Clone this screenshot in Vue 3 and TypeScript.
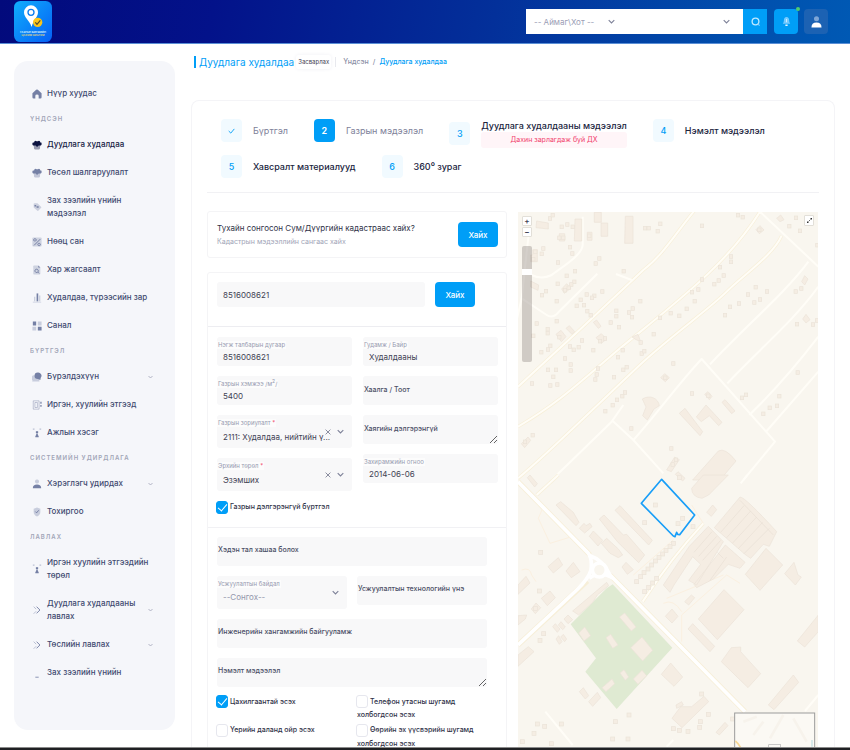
<script setup lang="ts">
import { ref } from 'vue'

interface Shape { d: string; o?: number; s?: boolean }
interface NavItem { text: string; icon: string; active?: boolean; open?: boolean }
interface NavGroup { title: string; items: NavItem[] }

// Icon shapes on a 24-unit grid; `o` is opacity, `s` marks a stroked shape.
const icons: Record<string, Shape[]> = {
  home: [{ d: 'M1 10 L10 2 Q12 .5 14 2 L23 10 V20 Q23 23 20 23 H16 V16 Q16 13 12 13 Q8 13 8 16 V23 H4 Q1 23 1 20Z' }],
  basket: [
    { d: 'M4 11 H20 L19 21 Q18.6 23 16 23 H8 Q5.4 23 5 21Z', o: 0.4 },
    { d: 'M6 3 Q8 1 11 3 H14 Q17 1 19 3 L20 6 H22 Q23 6 23 8 V11 Q23 13 21 13 H16 L12 17 L9 13 H3 Q1 13 1 11 V8 Q1 6 3 6 H5Z' },
  ],
  tag: [
    { d: 'M4 5 Q4 3 6 3 H13 L22 12 Q23 13 22 14 L15 21 Q14 22 13 21 L4 13Z', o: 0.32 },
    { d: 'M6 7 H10 V11 H6Z M11 10 H16 V14 H11Z' },
  ],
  percent: [
    { d: 'M3 1 H21 Q23 1 23 3 V21 Q23 23 21 23 H3 Q1 23 1 21 V3 Q1 1 3 1Z', o: 0.3 },
    { d: 'M20 5 L5 20 M7 4 A3 3 0 1 0 7.1 4 M17 15 A3 3 0 1 0 17.1 15', s: true },
  ],
  file: [
    { d: 'M5 1 H15 L20 6 V21 Q20 23 18 23 H5 Q3 23 3 21 V3 Q3 1 5 1Z', o: 0.3 },
    { d: 'M15 1 L20 6 H15Z' },
    { d: 'M11 10 A4 4 0 1 0 11.1 10 M14 17 L17 20', s: true },
  ],
  bars: [
    { d: 'M11 1 H15 V20 H11Z' },
    { d: 'M5 9 H8 V20 H5Z M17 6 H20 V20 H17Z M2 21 H22 V23 H2Z', o: 0.35 },
  ],
  grid: [
    { d: 'M2 1 H10 V11 H2Z M14 14 H23 V23 H14Z' },
    { d: 'M14 1 H23 V11 H14Z M1 14 H10 V23 H1Z', o: 0.35 },
  ],
  bubble: [
    { d: 'M8 9 A6 6 0 0 0 2 21 L0 23 H9 L18 23 L17 18Z', o: 0.35 },
    { d: 'M14 1 A8 8 0 1 0 14 17 L20 19 L21 14 A8 8 0 0 0 14 1Z' },
  ],
  book: [
    { d: 'M3 2 H17 V22 H3Z M7 6 H13 V18 H7Z', o: 0.45, s: true },
    { d: 'M20 4 H23 V9 H20Z M20 12 H23 V16 H20Z' },
  ],
  people: [
    { d: 'M2 1 H6 V4 H2Z M18 1 H22 V4 H18Z', o: 0.45 },
    { d: 'M12 7 A3 3 0 1 0 12.1 7 M10 14 H14 V17 L16 19 V22 H8 V19 L10 17Z' },
  ],
  user: [
    { d: 'M12 1 A5 5 0 1 0 12.1 1', o: 0.35 },
    { d: 'M2 22 Q2 13 12 13 Q22 13 22 22Z' },
  ],
  shield: [
    { d: 'M12 1 L20 4 V12 Q20 19 12 23 Q4 19 4 12 V4Z', o: 0.35 },
    { d: 'M8 11 L11 14 L16 8', s: true },
  ],
  chevrons: [
    { d: 'M4 4 L10 10 M4 21 L10 15', o: 0.5, s: true },
    { d: 'M11 4 L19 12 L11 20', s: true },
  ],
  dash: [{ d: 'M8 21 H16 V23 H8Z' }],
}

const groups: NavGroup[] = [
  { title: '', items: [{ text: 'Нүүр хуудас', icon: 'home' }] },
  {
    title: 'Үндсэн',
    items: [
      { text: 'Дуудлага худалдаа', icon: 'basket', active: true },
      { text: 'Төсөл шалгаруулалт', icon: 'basket' },
      { text: 'Зах зээлийн үнийн мэдээлэл', icon: 'tag' },
      { text: 'Нөөц сан', icon: 'percent' },
      { text: 'Хар жагсаалт', icon: 'file' },
      { text: 'Худалдаа, түрээсийн зар', icon: 'bars' },
      { text: 'Санал', icon: 'grid' },
    ],
  },
  {
    title: 'Бүртгэл',
    items: [
      { text: 'Бүрэлдэхүүн', icon: 'bubble', open: true },
      { text: 'Иргэн, хуулийн этгээд', icon: 'book' },
      { text: 'Ажлын хэсэг', icon: 'people' },
    ],
  },
  {
    title: 'Системийн удирдлага',
    items: [
      { text: 'Хэрэглэгч удирдах', icon: 'user', open: true },
      { text: 'Тохиргоо', icon: 'shield' },
    ],
  },
  {
    title: 'Лавлах',
    items: [
      { text: 'Иргэн хуулийн этгээдийн төрөл', icon: 'people' },
      { text: 'Дуудлага худалдааны лавлах', icon: 'chevrons', open: true },
      { text: 'Төслийн лавлах', icon: 'chevrons', open: true },
      { text: 'Зах зээлийн үнийн', icon: 'dash' },
    ],
  },
]

const steps = [
  { n: '1', text: 'Бүртгэл', state: 'done', note: '' },
  { n: '2', text: 'Газрын мэдээлэл', state: 'current', note: '' },
  { n: '3', text: 'Дуудлага худалдааны мэдээлэл', state: '', note: 'Дахин зарлагдаж буй ДХ' },
  { n: '4', text: 'Нэмэлт мэдээлэл', state: '', note: '' },
  { n: '5', text: 'Хавсралт материалууд', state: '', note: '' },
  { n: '6', text: '360⁰ зураг', state: '', note: '' },
]

const parcel = ref('8516008621')
const unit = ref('8516008621')
const street = ref('Худалдааны')
const area = ref('5400')
const orderDate = ref('2014-06-06')
const detailed = ref(true)
const zoomLevel = ref(21)
const flags = ref([
  { id: 'power', text: 'Цахилгаантай эсэх', on: true },
  { id: 'phone', text: 'Телефон утасны шугамд холбогдсон эсэх', on: false },
  { id: 'flood', text: 'Үерийн даланд ойр эсэх', on: false },
  { id: 'own', text: 'Өөрийн эх үүсвэрийн шугамд холбогдсон эсэх', on: false },
])

// Centres of small houses in the upper and lower halves of the map.
const housesTop = [
  [120, 40], [128, 30], [155, 65], [172, 58], [188, 65], [148, 98], [160, 98], [238, 92], [180, 126], [187, 145], [100, 130], [95, 146], [76, 140], [70, 162],
  [144, 172], [268, 160], [257, 175], [195, 198], [170, 212], [143, 236], [193, 230], [184, 238], [165, 255], [176, 248], [108, 258], [96, 270], [140, 288], [253, 272],
  [277, 259], [230, 268], [212, 284], [200, 302], [246, 278], [222, 300], [232, 318], [242, 330], [391, 288], [368, 310], [357, 322], [366, 336], [319, 317], [319, 333],
  [302, 352], [327, 366], [140, 348], [80, 355], [113, 372], [113, 384], [70, 392], [148, 396], [121, 422], [114, 433], [94, 441], [180, 424], [191, 434], [206, 426], [216, 406],
  [250, 435], [285, 400], [270, 408], [165, 460], [182, 478], [182, 496], [138, 494], [114, 494], [130, 515], [121, 541], [142, 538], [66, 535], [264, 490], [260, 508],
  [256, 523], [312, 516], [340, 494], [350, 486], [338, 435], [324, 456], [395, 445], [403, 438], [431, 387], [392, 412], [450, 338], [482, 324], [508, 332], [530, 311],
  [554, 288], [546, 261], [565, 253], [576, 223], [613, 237], [626, 226], [641, 211], [630, 186], [663, 154], [663, 170], [576, 62], [451, 56], [443, 78], [405, 69], [416, 69],
  [341, 198], [645, 330], [660, 305], [687, 295], [714, 268], [737, 246], [771, 259], [750, 283], [733, 292], [684, 30], [698, 36], [748, 74], [870, 77], [838, 63], [858, 38],
  [922, 120], [857, 259], [874, 250], [861, 357], [909, 358], [921, 346], [863, 502], [546, 565], [595, 572], [708, 569], [696, 578], [808, 573], [801, 602], [779, 608], [760, 626],
  [490, 475], [466, 518], [345, 562], [337, 573], [321, 584], [308, 600], [286, 618], [364, 670], [484, 730], [488, 778], [498, 764], [68, 690], [45, 710],
]
const housesBottom = [
  [436, 90], [404, 143], [518, 130], [504, 146], [549, 155], [92, 232], [88, 348], [76, 400], [90, 496], [101, 476], [357, 720], [316, 740], [308, 792], [354, 792], [82, 747],
  [104, 754], [154, 747], [72, 775], [37, 800], [124, 806], [575, 657], [595, 718], [571, 740], [569, 757], [534, 769], [508, 766], [490, 761], [668, 732], [508, 8],
  [490, 205], [480, 215], [468, 226], [458, 237], [447, 247], [436, 258], [425, 270], [414, 282], [402, 293], [392, 305], [380, 320], [440, 310], [428, 324], [416, 337], [404, 350],
]
</script>

<template>
  <div class="page">
    <header class="top">
      <a class="logo" href="#" aria-label="Газрын биржийн цахим систем">
        <svg viewBox="0 0 114 123">
          <defs>
            <linearGradient id="lg" x1="0" y1="0" x2="1" y2="1">
              <stop offset="0" stop-color="#10aefc" /><stop offset="1" stop-color="#0560f5" />
            </linearGradient>
          </defs>
          <rect width="114" height="123" rx="19" fill="url(#lg)" />
          <path d="M51 13 a21 21 0 0 1 21 21 c0 14 -13 22 -19 44 c-7 -20 -23 -28 -23 -44 a21 21 0 0 1 21 -21Z" fill="#fff" />
          <circle cx="51" cy="34" r="9" fill="#fff" stroke="#0b7df0" stroke-width="4" />
          <circle cx="71" cy="64" r="14" fill="#fbc51b" />
          <path d="M64 64 l5 6 l10 -12" fill="none" stroke="#4b4a35" stroke-width="3.5" />
          <text x="57" y="96" class="logo-a">ГАЗРЫН БИРЖИЙН</text>
          <text x="57" y="106" class="logo-b">ЦАХИМ СИСТЕМ</text>
        </svg>
      </a>
      <form class="search" @submit.prevent>
        <div class="pick">
          <select aria-label="Аймаг\Хот"><option>-- Аймаг\Хот --</option></select>
          <svg class="chev" viewBox="0 0 10 6"><path d="M1 1 L5 5 L9 1" /></svg>
        </div>
        <div class="pick wide">
          <select aria-label="Сум"><option></option></select>
          <svg class="chev" viewBox="0 0 10 6"><path d="M1 1 L5 5 L9 1" /></svg>
        </div>
        <button class="sq find" aria-label="Хайх">
          <svg viewBox="0 0 24 24"><circle cx="12" cy="12" r="9" fill="none" stroke="#bfe9ff" stroke-width="3.5" /><path d="M18 18 L23 23" stroke="#7fd0ff" stroke-width="3" /></svg>
        </button>
      </form>
      <button class="sq bell" aria-label="Мэдэгдэл">
        <svg viewBox="0 0 24 26"><path d="M12 1 Q19 2 19 10 Q19 15 22 19 H2 Q5 15 5 10 Q5 2 12 1Z" fill="#74caff" /><path d="M11 6 H13 V15 H11Z M9 21 H15 V25 H9Z" fill="#e8f8ff" /></svg>
        <i class="dot"></i>
      </button>
      <button class="sq me" aria-label="Хэрэглэгч">
        <svg viewBox="0 0 24 26"><circle cx="12" cy="6" r="5.5" fill="#7fa6d6" /><path d="M1 25 Q1 14 12 14 Q23 14 23 25Z" fill="#fff" /></svg>
      </button>
    </header>

    <div class="body">
      <aside class="side">
        <nav>
          <template v-for="g in groups" :key="g.title">
            <h2 v-if="g.title">{{ g.title }}</h2>
            <a v-for="it in g.items" :key="it.text" href="#" class="item" :class="{ active: it.active }">
              <svg class="ico" viewBox="0 0 24 24">
                <path v-for="(p, i) in icons[it.icon]" :key="i" :d="p.d" :opacity="p.o ?? 1" :class="{ line: p.s }" />
              </svg>
              <span>{{ it.text }}</span>
              <svg v-if="it.open" class="chev pale" viewBox="0 0 10 6"><path d="M1 1 L5 5 L9 1" /></svg>
            </a>
          </template>
        </nav>
      </aside>

      <main>
        <div class="title">
          <h1>Дуудлага худалдаа</h1>
          <span class="tagged">Засварлах</span>
          <span class="crumbs"><a href="#">Үндсэн</a><b>/</b><a href="#" class="here">Дуудлага худалдаа</a></span>
        </div>

        <section class="panel">
          <ol class="steps">
            <li v-for="s in steps" :key="s.n" :class="s.state">
              <span class="num">
                <svg v-if="s.state === 'done'" viewBox="0 0 10 8"><path d="M1 4 L4 7 L9 1" /></svg>
                <template v-else>{{ s.n }}</template>
              </span>
              <span class="cap">{{ s.text }}<em v-if="s.note">{{ s.note }}</em></span>
            </li>
          </ol>

          <div class="cols">
            <div class="form">
              <div class="card ask">
                <div>
                  <p>Тухайн сонгосон Сум/Дүүргийн кадастраас хайх?</p>
                  <small>Кадастрын мэдээллийн сангаас хайх</small>
                </div>
                <button class="go">Хайх</button>
              </div>

              <div class="card">
                <form class="lookup" @submit.prevent>
                  <input v-model="parcel" aria-label="Нэгж талбарын дугаар хайх">
                  <button class="go">Хайх</button>
                </form>

                <div class="pair">
                  <div class="stack">
                    <div class="field"><input id="unit" v-model="unit"><label for="unit">Нэгж талбарын дугаар</label></div>
                    <div class="field"><input id="area" v-model="area"><label for="area">Газрын хэмжээ /м<sup>2</sup>/</label></div>
                    <div class="field drop">
                      <select id="use"><option>2111: Худалдаа, нийтийн ү...</option></select>
                      <label for="use">Газрын зориулалт <i>*</i></label>
                      <button class="clear" aria-label="Арилгах"><svg viewBox="0 0 10 10"><path d="M1 1 L9 9 M9 1 L1 9" /></svg></button>
                      <svg class="chev" viewBox="0 0 10 6"><path d="M1 1 L5 5 L9 1" /></svg>
                    </div>
                    <div class="field drop">
                      <select id="right"><option>Эзэмших</option></select>
                      <label for="right">Эрхийн төрөл <i>*</i></label>
                      <button class="clear" aria-label="Арилгах"><svg viewBox="0 0 10 10"><path d="M1 1 L9 9 M9 1 L1 9" /></svg></button>
                      <svg class="chev" viewBox="0 0 10 6"><path d="M1 1 L5 5 L9 1" /></svg>
                    </div>
                  </div>
                  <div class="stack">
                    <div class="field"><input id="street" v-model="street"><label for="street">Гудамж / Байр</label></div>
                    <div class="field empty"><input id="door"><label for="door">Хаалга / Тоот</label></div>
                    <div class="field empty"><textarea id="addr"></textarea><label for="addr">Хаягийн дэлгэрэнгүй</label></div>
                    <div class="field"><input id="date" v-model="orderDate"><label for="date">Захирамжийн огноо</label></div>
                  </div>
                </div>
                <label class="tick main-tick"><input v-model="detailed" type="checkbox">Газрын дэлгэрэнгүй бүртгэл</label>

                <div class="more">
                  <div class="field empty"><input id="fence"><label for="fence">Хэдэн тал хашаа болох</label></div>
                  <div class="half">
                    <div class="field drop muted">
                      <select id="water"><option>--Сонгох--</option></select>
                      <label for="water">Усжуулалтын байдал</label>
                      <svg class="chev" viewBox="0 0 10 6"><path d="M1 1 L5 5 L9 1" /></svg>
                    </div>
                    <div class="field empty"><input id="tech"><label for="tech">Усжуулалтын технологийн үнэ</label></div>
                  </div>
                  <div class="field empty"><input id="eng"><label for="eng">Инженерийн хангамжийн байгууламж</label></div>
                  <div class="field empty"><textarea id="note"></textarea><label for="note">Нэмэлт мэдээлэл</label></div>
                  <div class="ticks">
                    <label v-for="f in flags" :key="f.id" class="tick"><input v-model="f.on" type="checkbox">{{ f.text }}</label>
                  </div>
                </div>
              </div>
            </div>

            <div class="map">
              <svg class="canvas" viewBox="0 0 900 1608">
                <rect width="900" height="1608" fill="#f9f6ef" />
                <g transform="translate(-24 -21)">
                  <g class="halo">
                    <path d="M24 545 C150 430 300 290 400 195 C460 150 500 80 555 15" />
                    <path d="M24 665 C150 590 200 540 330 430 C500 290 650 180 750 20" />
                    <path d="M24 820 C110 750 250 610 400 470 C500 380 600 310 650 260 C700 210 790 150 815 92" />
                  </g>
                  <g class="road">
                    <path d="M24 545 C150 430 300 290 400 195 C460 150 500 80 555 15 M24 665 C150 590 200 540 330 430 C500 290 650 180 750 20 L925 185 M24 820 C110 750 250 610 400 470 C500 380 600 310 650 260 C700 210 790 150 815 92" />
                    <path d="M125 825 L305 650 L340 600 M305 645 L370 705 L460 805 M370 705 C430 640 510 530 575 462 L795 710 L700 825 M600 478 C700 370 830 260 895 170 M652 535 C740 440 850 350 925 245 M718 630 C780 570 860 480 925 395 M770 678 L925 500" />
                    <path d="M218 35 V120 C218 150 150 190 125 210 Q95 225 65 210 M58 70 L35 280 L110 330 Q128 342 145 322 L262 206 M35 280 L20 345 M318 207 L365 225" />
                  </g>
                  <g class="bld">
                    <path d="M80 48 L115 54 V72 L78 68Z M195 42 H215 V108 H193Z M253 22 H274 V52 H253Z M273 54 H293 V94 H273Z M346 34 H369 V115 H344Z M232 82 H246 V106 H232Z M148 86 H164 V108 H148Z M68 134 H82 V170 H62V150 H68Z M62 228 L86 240 L84 256 L62 246Z" />
                    <path d="M155 252 L170 236 L182 250 L163 265Z M138 388 L153 376 L168 395 L154 410Z M168 370 L178 362 L194 380 L186 388Z M250 352 L260 345 L273 364 L265 370Z M366 396 L384 388 L392 410 L378 404Z M258 398 L274 386 L290 402 L274 415Z" />
                    <path d="M875 230 L884 212 L894 222 L884 240Z M878 342 L888 328 L900 344 L888 354Z M800 40 L812 30 L822 44 L810 50Z M738 74 L750 62 L762 75 L748 86Z M452 518 L464 506 L478 518 L466 530Z" />
                    <path d="M397 582 C420 568 445 580 448 602 L432 612 L412 645 L398 632 L408 606Z M508 625 L525 610 L578 680 L570 692Z M559 636 L588 600 L636 652 L626 662 L598 632 L574 650Z M636 592 L645 584 L675 618 L665 626Z M584 568 L594 560 L606 574 L598 584Z" />
                    <path d="M548 825 L625 738 Q645 726 678 768 L630 825Z M470 795 L494 756 L508 764 L484 800Z M496 808 L504 800 L525 820 L518 828Z M34 716 L54 696 L62 706 L44 728Z" />
                    <rect v-for="(h, i) in housesTop" :key="i" :x="h[0] - 5" :y="h[1] - 5" width="10" height="11" />
                  </g>
                </g>
                <g transform="translate(-24 789)">
                  <path d="M308 328 L487 518 L320 702 L226 590 L258 550 L182 448 L290 340Z" fill="#dfead2" />
                  <g class="halo wide">
                    <path d="M24 20 L240 240 M300 300 L705 710 M24 510 L232 318" />
                  </g>
                  <g class="halo"><path d="M80 60 L145 0 M398 380 C450 300 520 210 580 145" /></g>
                  <g class="lane">
                    <path d="M100 95 L85 130 L120 205 L185 185 M35 285 Q60 275 65 300 L78 320 M370 300 L490 195 M545 90 L580 145 M470 370 L640 300 M515 500 V420 L650 300 L690 325 M460 385 Q490 370 515 410" />
                  </g>
                  <g class="road big">
                    <path d="M24 20 L235 235 Q247 250 243 285 Q235 312 200 345 L24 510 M300 300 L705 710 M235 240 Q280 255 300 300 M238 310 Q270 285 310 310" />
                    <circle cx="268" cy="285" r="21" fill="#f9f6ef" />
                  </g>
                  <g class="road">
                    <path d="M80 60 L145 0 M398 380 C450 300 520 210 580 145 M106 710 L188 810 M885 708 L925 660 M692 25 L712 0 M470 815 L490 795" />
                  </g>
                  <g class="bld">
                    <path d="M52 8 L60 0 L82 26 L74 36Z M138 90 L152 80 L190 112 L207 142 L198 152Z M208 160 L222 145 L228 152 L240 145 L246 155 L224 174Z M238 184 L250 168 L278 196 L264 213Z M274 205 L290 190 L325 222 L338 240 L325 248 L300 235Z" />
                    <path d="M268 132 L282 120 L340 180 L350 178 L404 240 L386 263 L322 200Z M315 106 L330 92 L427 196 L416 210Z M336 276 L348 262 L370 284 L352 298Z M114 275 L145 248 L158 270 L130 294Z M168 288 L190 262 L210 290 L184 308Z" />
                    <path d="M24 330 L48 304 L60 324 L24 358Z M94 370 L120 348 L136 368 L112 392Z M64 402 L78 384 L92 398 L76 416Z M24 422 L50 420 L46 432 L24 450Z M24 540 L55 515 L72 530 L24 574Z M188 408 L290 322 L296 332 L262 360 L248 382 L206 420Z M162 432 L174 420 L188 434 L174 446Z" />
                    <path d="M128 455 L136 446 L150 462 L142 472Z M145 450 L153 440 L166 456 L158 464Z M138 492 L146 482 L156 500 L148 508Z M152 486 L160 478 L170 492 L164 500Z" />
                    <path d="M545 40 L580 0 L655 0 L596 60 L576 70 Q545 66 545 40Z M590 112 L608 90 L620 104 L604 124Z M613 158 L690 66 Q705 66 800 170 L778 214 L760 208 L722 250 L705 238Z" />
                    <path d="M538 214 L595 154 L640 200 L560 330 L536 316 L572 268 L548 245 L492 330 L480 352 L460 330 L500 270Z M552 328 L646 210 L705 262 L690 280 L655 268 L610 312 L560 338Z" />
                    <path d="M706 298 L768 220 L818 270 L750 346Z M824 296 L852 262 L864 300 L874 306 L856 330Z M565 432 L642 344 L702 404 L622 494Z M534 462 L548 446 L614 514 L600 530Z M466 424 L486 402 L504 424 L486 444Z M524 380 L544 360 L554 368 L536 390Z" />
                    <path d="M634 560 L664 518 L692 516 L692 530 L752 596 L714 638Z M454 598 L482 564 L518 606 L492 634Z M862 498 L925 420 V470 L884 516Z M775 690 L850 600 L866 622 L792 704Z M486 730 L512 695 L545 695 L582 664 L596 680 L516 758Z M498 690 L515 680 L520 690 L500 700Z M618 772 L645 742 L654 752 L628 780Z" />
                    <path d="M328 426 L344 414 L378 456 L364 468Z M362 518 L396 486 L428 526 L398 558Z M288 488 L302 478 L324 510 L308 520Z M206 474 L224 456 L242 482 L222 498Z M276 638 L306 612 L314 626 L288 650Z M330 594 L342 584 L356 606 L346 616Z M370 612 L396 586 L410 602 L384 628Z M208 650 L220 638 L236 662 L226 672Z M236 680 L262 652 L272 668 L248 694Z" />
                    <rect v-for="(h, i) in housesBottom" :key="i" :x="h[0] - 6" :y="h[1] - 6" width="12" height="12" />
                  </g>
                  <g class="cut">
                    <path d="M632 172 L702 92 M650 188 L722 108 M668 204 L740 126 M684 222 L758 142 M702 236 L778 160 M690 76 L790 180 M552 232 L606 170 M566 244 L620 184 M578 256 L632 196 M600 316 L650 246 M622 232 L640 250" />
                  </g>
                  <path d="M455 13 L554 120 L509 179 L503 178 L500 172 L495 185 L490 183 L394 85Z" fill="none" stroke="#189ef8" stroke-width="5" stroke-linejoin="round" />
                  <g>
                    <rect x="674" y="714" width="240" height="130" fill="#fbf9f4" stroke="#9b9b9b" stroke-width="3" />
                    <path d="M730 780 L760 740 M780 790 L820 720 M850 730 L890 800 M700 740 L740 725" stroke="#f7f3ec" stroke-width="8" fill="none" />
                    <path d="M676 798 Q684 804 692 818" stroke="#f7d795" stroke-width="5" fill="none" />
                    <path d="M906 795 V815" stroke="#cfe6e8" stroke-width="5" />
                    <rect x="776" y="809" width="36" height="30" fill="none" stroke="#b0b0b0" stroke-width="2" />
                  </g>
                </g>
              </svg>
              <div class="tools">
                <button aria-label="Томруулах">+</button>
                <button aria-label="Жижигрүүлэх">−</button>
                <input v-model="zoomLevel" class="zoom" type="range" min="0" max="100" aria-label="Масштаб">
              </div>
              <button class="full" aria-label="Бүтэн дэлгэц"><svg viewBox="0 0 10 10"><path d="M6 0 H10 V4Z M0 6 V10 H4Z" fill="#333" /><path d="M3 7 L7 3" stroke="#333" stroke-width="1.5" /></svg></button>
            </div>
          </div>
        </section>
      </main>
    </div>
    <div class="edge"></div>
  </div>
</template>

<style>
body { background: #fff; }
</style>

<style scoped>
* { box-sizing: border-box; margin: 0; }
.page { display: flex; flex-direction: column; height: 100vh; overflow: hidden; font-family: Inter, "Liberation Sans", sans-serif; font-size: 8px; color: #3f4254; }
button, input, select, textarea { font: inherit; color: inherit; border: 0; padding: 0; outline: 0; }
select { appearance: none; background: transparent; }
a { color: inherit; text-decoration: none; }
svg { display: block; }

.top { display: flex; align-items: center; flex: none; height: 44px; padding: 0 22px 0 14px; background: linear-gradient(100deg, #020a7c 0%, #03128a 25%, #03309a 58%, #0050ae 88%, #0059b4 100%); border-bottom: 1px solid #5a8fd6; }
.logo { width: 38px; margin-right: auto; }
.logo-a, .logo-b { font-size: 8px; font-weight: 700; text-anchor: middle; fill: #d8f1ff; }
.logo-b { fill: #d8d08a; }
.search { display: flex; height: 25px; width: 241px; }
.pick { display: grid; grid-template-columns: 1fr; width: 100px; background: #fff; color: #9a9db5; align-items: center; }
.pick.wide { flex: 1; }
.pick > * { grid-area: 1 / 1; }
.pick select { height: 100%; padding-left: 8px; }
.pick .chev { justify-self: end; margin-right: 11px; }
.pick.wide .chev { margin-right: 13px; }
.chev { width: 7px; height: 5px; fill: none; stroke: #7e8299; stroke-width: 1.6; pointer-events: none; }
.sq { position: relative; display: grid; place-items: center; flex: none; width: 24px; height: 25px; border-radius: 4px; background: #009ef7; }
.sq svg { width: 9px; height: 11px; }
.find { border-radius: 0; }
.bell { margin-left: 7px; }
.me { margin-left: 6px; background: #1c62b3; }
.me svg { width: 11px; height: 12px; }
.dot { position: absolute; top: -2px; right: -2px; width: 4px; height: 4px; border-radius: 2px; background: #50cd70; }

.body { display: flex; flex: 1; min-height: 0; padding: 0 15px 0 14px; gap: 16px; }
.side { flex: none; width: 161px; margin: 17px 0 17px; padding: 18px 19px 50px 16px; border-radius: 14px; background: #f5f6fa; }
nav { height: 100%; overflow: hidden; }
h2 { height: 23px; line-height: 23px; font-size: 6px; font-weight: 600; letter-spacing: 1px; text-transform: uppercase; color: #a1a5b7; }
.item { display: grid; grid-template-columns: 13px 1fr auto; align-items: center; column-gap: 4px; padding: 8px 3px 7px 0; line-height: 13px; font-size: 8px; font-weight: 500; color: #3f4a70; }
.item.active { color: #181c45; }
.ico { width: 10px; height: 10px; margin-left: 2px; fill: #7580a5; }
.active .ico { fill: #0b1240; }
.ico .line { fill: none; stroke: #66719a; stroke-width: 2; }
.pale { width: 5px; height: 4px; stroke: #a1a5b7; }

main { flex: 1; min-width: 0; display: flex; flex-direction: column; }
.title { display: flex; align-items: center; flex: none; height: 56px; padding: 0 0 20px 3px; }
h1 { padding-left: 3px; border-left: 2px solid #009ef7; line-height: 12px; font-size: 10px; font-weight: 400; color: #009ef7; }
.tagged { margin: 0 4px 0 2px; padding: 0 2px; line-height: 14px; font-size: 6px; border-radius: 3px; box-shadow: 0 0 4px #f0f0f4; }
.crumbs { display: flex; gap: 4px; padding-left: 7px; border-left: 1px solid #e8e9ee; line-height: 10px; font-size: 7px; font-weight: 500; color: #8b8fa5; }
.crumbs b { font-weight: 500; }
.here { color: #009ef7; }

.panel { flex: 1; min-height: 0; overflow: hidden; border: 1px solid #f4f4f7; border-bottom: 0; border-radius: 8px 8px 0 0; padding: 0 15px; }
.steps { display: flex; flex-wrap: wrap; align-items: flex-start; gap: 7px 26px; list-style: none; padding: 18px 0 14px 14px; border-bottom: 1px solid #f1f1f4; }
.steps li { display: flex; align-items: center; gap: 11px; font-size: 9px; font-weight: 500; color: #20243e; }
.num { display: grid; place-items: center; width: 21px; height: 23px; border-radius: 4px; background: #f1faff; color: #009ef7; }
.num svg { width: 7px; height: 6px; fill: none; stroke: #009ef7; stroke-width: 1.3; }
.cap { line-height: 13px; }
.cap em { display: block; line-height: 16px; font-size: 7px; font-weight: 400; font-style: normal; text-align: center; color: #f1416c; background: #fff5f8; border-radius: 3px; }
.steps .done, .steps .current { color: #7e8199; font-weight: 400; }
.current .num { background: #009ef7; color: #fff; font-weight: 600; }

.cols { display: grid; grid-template-columns: minmax(0, 1fr) minmax(0, 1fr); gap: 11px; padding: 18px 1px 0 0; }
.form { display: flex; flex-direction: column; gap: 14px; }
.card { border: 1px solid #f4f4f6; border-radius: 3px; padding: 9px 8px 9px 9px; }
.ask { display: flex; justify-content: space-between; align-items: center; height: 47px; }
.ask p { line-height: 12px; font-size: 8px; font-weight: 400; color: #2f3248; }
.ask small { display: block; margin-top: 3px; line-height: 10px; font-size: 7px; color: #a1a5b7; }
.go { width: 40px; height: 25px; border-radius: 4px; background: #009ef7; color: #fff; font-size: 8px; font-weight: 500; }
.lookup { display: flex; gap: 10px; margin: 0 -8px 10px -9px; padding: 0 31px 19px 9px; border-bottom: 1px solid #ededf1; }
.lookup input { flex: 1; min-width: 0; height: 25px; padding-left: 6px; border-radius: 3px; background: #f8f8f9; }
.pair { display: grid; grid-template-columns: 1fr 1fr; gap: 11px; }
.stack { display: flex; flex-direction: column; gap: 10px; }
.field { position: relative; display: grid; height: 29px; border-radius: 3px; background: #f8f8f9; }
.field > input, .field > select, .field > textarea, .field > label { grid-area: 1 / 1; }
.field > input, .field > select { padding: 10px 0 0 6px; min-width: 0; background: transparent; }
.field > textarea { padding: 4px; background: transparent; resize: vertical; height: 29px; color: #9a9cab; }
.field > label { place-self: start; margin-top: 4px; padding: 0 1px; line-height: 8px; font-size: 6px; color: #969ab0; background: #fcfcfc; pointer-events: none; }
.field label i { color: #f1416c; font-style: normal; }
.field sup { font-size: 5px; line-height: 0; }
.field.empty > label { align-self: center; margin: 0 0 2px; line-height: 10px; font-size: 7px; font-weight: 500; color: #4b4f66; background: none; }
.drop { height: 33px; }
.muted select { color: #9296ab; }
.drop .chev { position: absolute; right: 8px; top: 14px; }
.clear { position: absolute; right: 20px; top: 13px; width: 7px; height: 7px; background: transparent; }
.clear svg { width: 6px; height: 6px; stroke: #6b6f86; stroke-width: 1.3; }
.tick { display: block; line-height: 13px; font-size: 7px; font-weight: 500; color: #2f3248; }
.tick input { appearance: none; display: inline-grid; place-items: center; width: 12px; height: 13px; margin: 0 2px 0 -1px; vertical-align: middle; border: 1px solid #e6e7ee; border-radius: 3px; background: #fff; }
.tick input:checked { border-color: #009ef7; background: #009ef7; }
.tick input:checked::after { content: ""; width: 4px; height: 8px; margin-top: -2px; border: solid #fff; border-width: 0 1px 1px 0; transform: rotate(40deg); }
.main-tick { margin: 9px 0 13px; }
.more { display: flex; flex-direction: column; gap: 10px; margin: 0 -8px 0 -9px; padding: 9px 19px 0 9px; border-top: 1px solid #f1f1f4; }
.half, .ticks { display: grid; grid-template-columns: 1fr 1fr; column-gap: 10px; align-items: start; }
.ticks { row-gap: 2px; margin-top: -2px; }

.map { position: relative; margin-top: 1px; }
.canvas { width: 100%; height: auto; }
.halo { fill: none; stroke: #f7efd9; stroke-width: 10; }
.halo.wide { stroke-width: 16; }
.road { fill: none; stroke: #fffdf7; stroke-width: 6; stroke-linejoin: round; }
.road.big { stroke-width: 11; stroke: #fff; }
.lane { fill: none; stroke: #fbf0e0; stroke-width: 3; }
.bld { fill: #f5ede3; stroke: #ebe3d8; stroke-width: 2; }
.cut { fill: none; stroke: #e9e0d4; stroke-width: 2; }
.tools { position: absolute; left: 4px; top: 4px; display: flex; flex-direction: column; gap: 1px; }
.tools button { width: 10px; height: 10px; line-height: 9px; font-size: 8px; font-weight: 600; background: #fff; border: 1px solid #e2dfd8; border-radius: 1px; }
.zoom { appearance: none; writing-mode: vertical-lr; width: 10px; height: 116px; margin: 8px 0 0; background: rgba(120, 112, 108, .32); border-radius: 2px; }
.zoom::-webkit-slider-thumb { appearance: none; width: 10px; height: 6px; background: #fff; }
.full { position: absolute; right: 4px; top: 3px; display: grid; place-items: center; width: 10px; height: 11px; background: #fff; border: 1px solid #e2dfd8; border-radius: 1px; }
.full svg { width: 5px; height: 5px; }
.edge { flex: none; height: 3px; background: #1f2023; border-top: 1px solid #8a8a8a; }
</style>
